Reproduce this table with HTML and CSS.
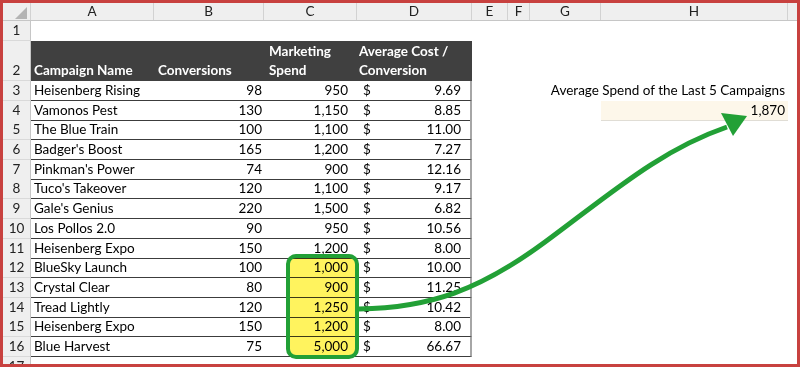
FILE: index.html
```html
<!DOCTYPE html>
<html>
<head>
<meta charset="utf-8">
<link rel="stylesheet" href="styles.css">
</head>
<body>
<div class="frame">
  <div class="sheet">
    <div class="r hdr">
      <div class="corner"><span class="tri"></span></div>
      <div class="ch">A</div><div class="ch">B</div><div class="ch">C</div><div class="ch">D</div>
      <div class="ch">E</div><div class="ch">F</div><div class="ch">G</div><div class="ch">H</div><div class="ch last"></div>
    </div>
    <div class="r r1"><div class="rh">1</div></div>
    <div class="r r2">
      <div class="rh">2</div>
      <div class="th">Campaign Name</div>
      <div class="th thb">Conversions</div>
      <div class="th thc">Marketing<br>Spend</div>
      <div class="th thd">Average Cost /<br>Conversion</div>
    </div>
    <div class="r"><div class="rh">3</div><div class="t a">Heisenberg Rising</div><div class="t b">98</div><div class="t c">950</div><div class="t d"><span>$</span><span>9.69</span></div><div class="note">Average Spend of the Last 5 Campaigns</div></div>
    <div class="r"><div class="rh">4</div><div class="t a">Vamonos Pest</div><div class="t b">130</div><div class="t c">1,150</div><div class="t d"><span>$</span><span>8.85</span></div><div class="e"></div><div class="e"></div><div class="e"></div><div class="result">1,870</div></div>
    <div class="r"><div class="rh">5</div><div class="t a">The Blue Train</div><div class="t b">100</div><div class="t c">1,100</div><div class="t d"><span>$</span><span>11.00</span></div></div>
    <div class="r"><div class="rh">6</div><div class="t a">Badger's Boost</div><div class="t b">165</div><div class="t c">1,200</div><div class="t d"><span>$</span><span>7.27</span></div></div>
    <div class="r"><div class="rh">7</div><div class="t a">Pinkman's Power</div><div class="t b">74</div><div class="t c">900</div><div class="t d"><span>$</span><span>12.16</span></div></div>
    <div class="r"><div class="rh">8</div><div class="t a">Tuco's Takeover</div><div class="t b">120</div><div class="t c">1,100</div><div class="t d"><span>$</span><span>9.17</span></div></div>
    <div class="r"><div class="rh">9</div><div class="t a">Gale's Genius</div><div class="t b">220</div><div class="t c">1,500</div><div class="t d"><span>$</span><span>6.82</span></div></div>
    <div class="r"><div class="rh">10</div><div class="t a">Los Pollos 2.0</div><div class="t b">90</div><div class="t c">950</div><div class="t d"><span>$</span><span>10.56</span></div></div>
    <div class="r"><div class="rh">11</div><div class="t a">Heisenberg Expo</div><div class="t b">150</div><div class="t c">1,200</div><div class="t d"><span>$</span><span>8.00</span></div></div>
    <div class="r"><div class="rh">12</div><div class="t a">BlueSky Launch</div><div class="t b">100</div><div class="t c">1,000</div><div class="t d"><span>$</span><span>10.00</span></div></div>
    <div class="r"><div class="rh">13</div><div class="t a">Crystal Clear</div><div class="t b">80</div><div class="t c">900</div><div class="t d"><span>$</span><span>11.25</span></div></div>
    <div class="r"><div class="rh">14</div><div class="t a">Tread Lightly</div><div class="t b">120</div><div class="t c">1,250</div><div class="t d"><span>$</span><span>10.42</span></div></div>
    <div class="r"><div class="rh">15</div><div class="t a">Heisenberg Expo</div><div class="t b">150</div><div class="t c">1,200</div><div class="t d"><span>$</span><span>8.00</span></div></div>
    <div class="r"><div class="rh">16</div><div class="t a">Blue Harvest</div><div class="t b">75</div><div class="t c">5,000</div><div class="t d"><span>$</span><span>66.67</span></div></div>
    <div class="r r17"><div class="rh">17</div></div>
  </div>
  <svg class="overlay fill" width="800" height="367" viewBox="0 0 800 367">
    <rect x="288" y="256" width="69" height="101" rx="8" ry="8" fill="#fff35e"/>
  </svg>
  <svg class="overlay" width="800" height="367" viewBox="0 0 800 367">
    <rect x="288" y="256" width="69" height="101" rx="8" ry="8" fill="none" stroke="#22a036" stroke-width="4"/>
    <path d="M359 309 C 430 308 480 290 545 242 C 610 194 660 150 727 127" fill="none" stroke="#22a036" stroke-width="5"/>
    <polygon points="747,116 721,113 733,136" fill="#22a036"/>
  </svg>
</div>
</body>
</html>
```
FILE: styles.css
```css
* { box-sizing: border-box; }
body {
  margin: 0;
  font-family: Lato, "Open Sans", sans-serif;
  font-size: 13.5px;
  color: #000;
  background: #fff;
}
.frame {
  position: relative;
  width: 800px;
  height: 367px;
  border: 3px solid #c8413f;
  overflow: hidden;
  background: #fff;
}
.sheet {
  display: flex;
  flex-direction: column;
}
.r {
  display: grid;
  grid-template-columns: 28px 123px 110px 93px 115px 36px 22px 71px 187px 1fr;
  height: 19.7px;
  flex: none;
}
.hdr { height: 18px; background: #efefef; border-bottom: 1px solid #c6c6c6; }
.r1 { height: 20px; }
.r2 { height: 40px; }
.r17 { height: 20px; }
.corner { position: relative; border-right: 1px solid #d2d2d2; }
.tri {
  position: absolute;
  left: 12px; top: 4px;
  width: 12px; height: 12px;
  background: #b4b4b4;
  clip-path: polygon(100% 0, 100% 100%, 0 100%);
}
.ch {
  text-align: center;
  line-height: 17px;
  color: #222;
  border-right: 1px solid #d2d2d2;
}
.ch.last { border-right: none; }
.rh {
  background: #efefef;
  border-right: 1px solid #c6c6c6;
  border-bottom: 1px solid #d9d9d9;
  text-align: center;
  color: #222;
  display: flex;
  align-items: flex-end;
  justify-content: center;
  padding-bottom: 1px;
  line-height: 18px;
}
.th {
  background: #404040;
  color: #fff;
  font-weight: bold;
  display: flex;
  align-items: flex-end;
  line-height: 19px;
  padding: 0 0 1px 3px;
}
.thb { padding-left: 4px; }
.thc { padding-left: 5px; }
.thd { padding-left: 2px; }
.t {
  border-bottom: 1px solid #3c3c3c;
  line-height: 18px;
  white-space: nowrap;
  overflow: hidden;
}
.a { padding-left: 3px; }
.b { text-align: right; padding-right: 2px; }
.c { text-align: right; padding-right: 9px; }
.d {
  display: flex;
  justify-content: space-between;
  padding: 0 9px 0 6px;
  border-right: 2px solid #a6a6a6;
}
.note {
  grid-column: 8 / span 2;
  text-align: right;
  white-space: nowrap;
  padding-right: 3px;
  line-height: 18px;
}
.result {
  background: #fdf7ea;
  border-bottom: 1px solid #e0ddd5;
  text-align: right;
  padding-right: 3px;
  line-height: 18px;
}
.overlay {
  position: absolute;
  left: -3px;
  top: -3px;
  pointer-events: none;
}
.overlay.fill {
  mix-blend-mode: multiply;
}
```
